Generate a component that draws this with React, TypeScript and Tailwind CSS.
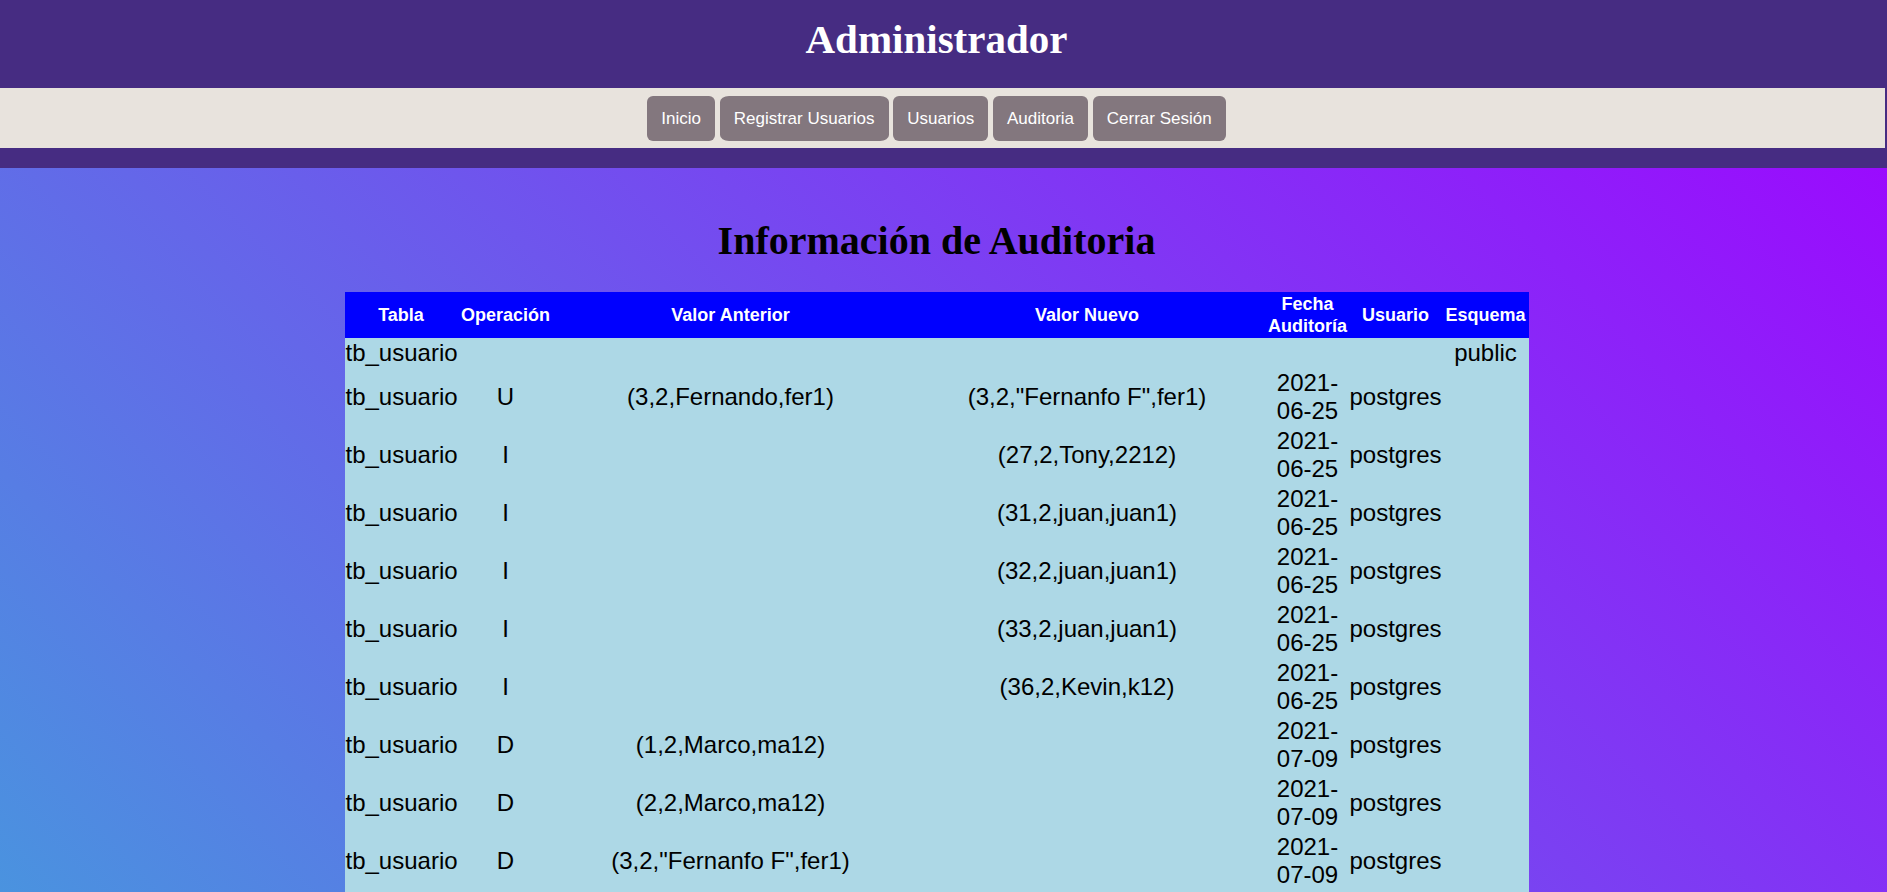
import React from "react";

type Row = {
  tabla: string;
  op: string;
  anterior: string;
  nuevo: string;
  fecha: string;
  usuario: string;
  esquema: string;
};

const rows: Row[] = [
  { tabla: "tb_usuario", op: "", anterior: "", nuevo: "", fecha: "", usuario: "", esquema: "public" },
  { tabla: "tb_usuario", op: "U", anterior: "(3,2,Fernando,fer1)", nuevo: '(3,2,"Fernanfo F",fer1)', fecha: "2021-06-25", usuario: "postgres", esquema: "" },
  { tabla: "tb_usuario", op: "I", anterior: "", nuevo: "(27,2,Tony,2212)", fecha: "2021-06-25", usuario: "postgres", esquema: "" },
  { tabla: "tb_usuario", op: "I", anterior: "", nuevo: "(31,2,juan,juan1)", fecha: "2021-06-25", usuario: "postgres", esquema: "" },
  { tabla: "tb_usuario", op: "I", anterior: "", nuevo: "(32,2,juan,juan1)", fecha: "2021-06-25", usuario: "postgres", esquema: "" },
  { tabla: "tb_usuario", op: "I", anterior: "", nuevo: "(33,2,juan,juan1)", fecha: "2021-06-25", usuario: "postgres", esquema: "" },
  { tabla: "tb_usuario", op: "I", anterior: "", nuevo: "(36,2,Kevin,k12)", fecha: "2021-06-25", usuario: "postgres", esquema: "" },
  { tabla: "tb_usuario", op: "D", anterior: "(1,2,Marco,ma12)", nuevo: "", fecha: "2021-07-09", usuario: "postgres", esquema: "" },
  { tabla: "tb_usuario", op: "D", anterior: "(2,2,Marco,ma12)", nuevo: "", fecha: "2021-07-09", usuario: "postgres", esquema: "" },
  { tabla: "tb_usuario", op: "D", anterior: '(3,2,"Fernanfo F",fer1)', nuevo: "", fecha: "2021-07-09", usuario: "postgres", esquema: "" },
];

const navItems = ["Inicio", "Registrar Usuarios", "Usuarios", "Auditoria", "Cerrar Sesión"];

export default function App() {
  return (
    <div className="w-full h-[892px] flex flex-col overflow-hidden font-['Liberation_Sans',Arial,sans-serif]">
      <header className="bg-[#462c82] shrink-0">
        <div className="h-[88px] pt-[16px] pr-[14px] flex justify-center">
          <h1 className="font-['Liberation_Serif','Times_New_Roman',serif] font-bold text-[41px] leading-[46px] text-white m-0">
            Administrador
          </h1>
        </div>
        <nav className="h-[60px] mr-[2px] bg-[#e8e3dd] pt-[8px] pr-[12px] flex justify-center items-start gap-[4.7px]">
          {navItems.map((item) => (
            <a
              key={item}
              href="#"
              className={
                "h-[45px] px-[14px] flex items-center bg-[#83777e] text-white text-[17px] leading-none " +
                (item === "Registrar Usuarios" ? "rounded-[9px/6px]" : "rounded-[6px]")
              }
            >
              {item}
            </a>
          ))}
        </nav>
        <div className="h-[20px]" />
      </header>
      <main className="flex-1 overflow-hidden bg-[linear-gradient(45deg,#4a93df,#9a0bfe)]">
        <div className="pr-[14px] flex flex-col items-center">
          <h2 className="mt-[50px] mb-[28px] font-['Liberation_Serif','Times_New_Roman',serif] font-bold text-[40px] leading-[46px] text-black">
            Información de Auditoria
          </h2>
          <table className="w-[1184px] table-fixed border-collapse bg-[#add8e6] text-black">
            <colgroup>
              <col className="w-[113px]" />
              <col className="w-[96px]" />
              <col className="w-[354px]" />
              <col className="w-[359px]" />
              <col className="w-[82px]" />
              <col className="w-[94px]" />
              <col className="w-[86px]" />
            </colgroup>
            <thead>
              <tr className="bg-[#0000ff] text-white">
                {["Tabla", "Operación", "Valor Anterior", "Valor Nuevo", "Fecha Auditoría", "Usuario", "Esquema"].map((h) => (
                  <th key={h} className="px-[1px] py-[1px] text-[18px] leading-[22px] font-bold text-center align-middle">
                    {h}
                  </th>
                ))}
              </tr>
            </thead>
            <tbody>
              {rows.map((r, i) => (
                <tr key={i} className="text-[24px] leading-[28px]">
                  <td className="p-[1px] text-center align-middle whitespace-nowrap">{r.tabla}</td>
                  <td className="p-[1px] text-center align-middle">{r.op}</td>
                  <td className="p-[1px] text-center align-middle">{r.anterior}</td>
                  <td className="p-[1px] text-center align-middle">{r.nuevo}</td>
                  <td className="p-[1px] text-center align-middle">{r.fecha}</td>
                  <td className="p-[1px] text-center align-middle">{r.usuario}</td>
                  <td className="p-[1px] text-center align-middle">{r.esquema}</td>
                </tr>
              ))}
              <tr className="h-[58px]">
                <td colSpan={7} />
              </tr>
            </tbody>
          </table>
        </div>
      </main>
    </div>
  );
}
